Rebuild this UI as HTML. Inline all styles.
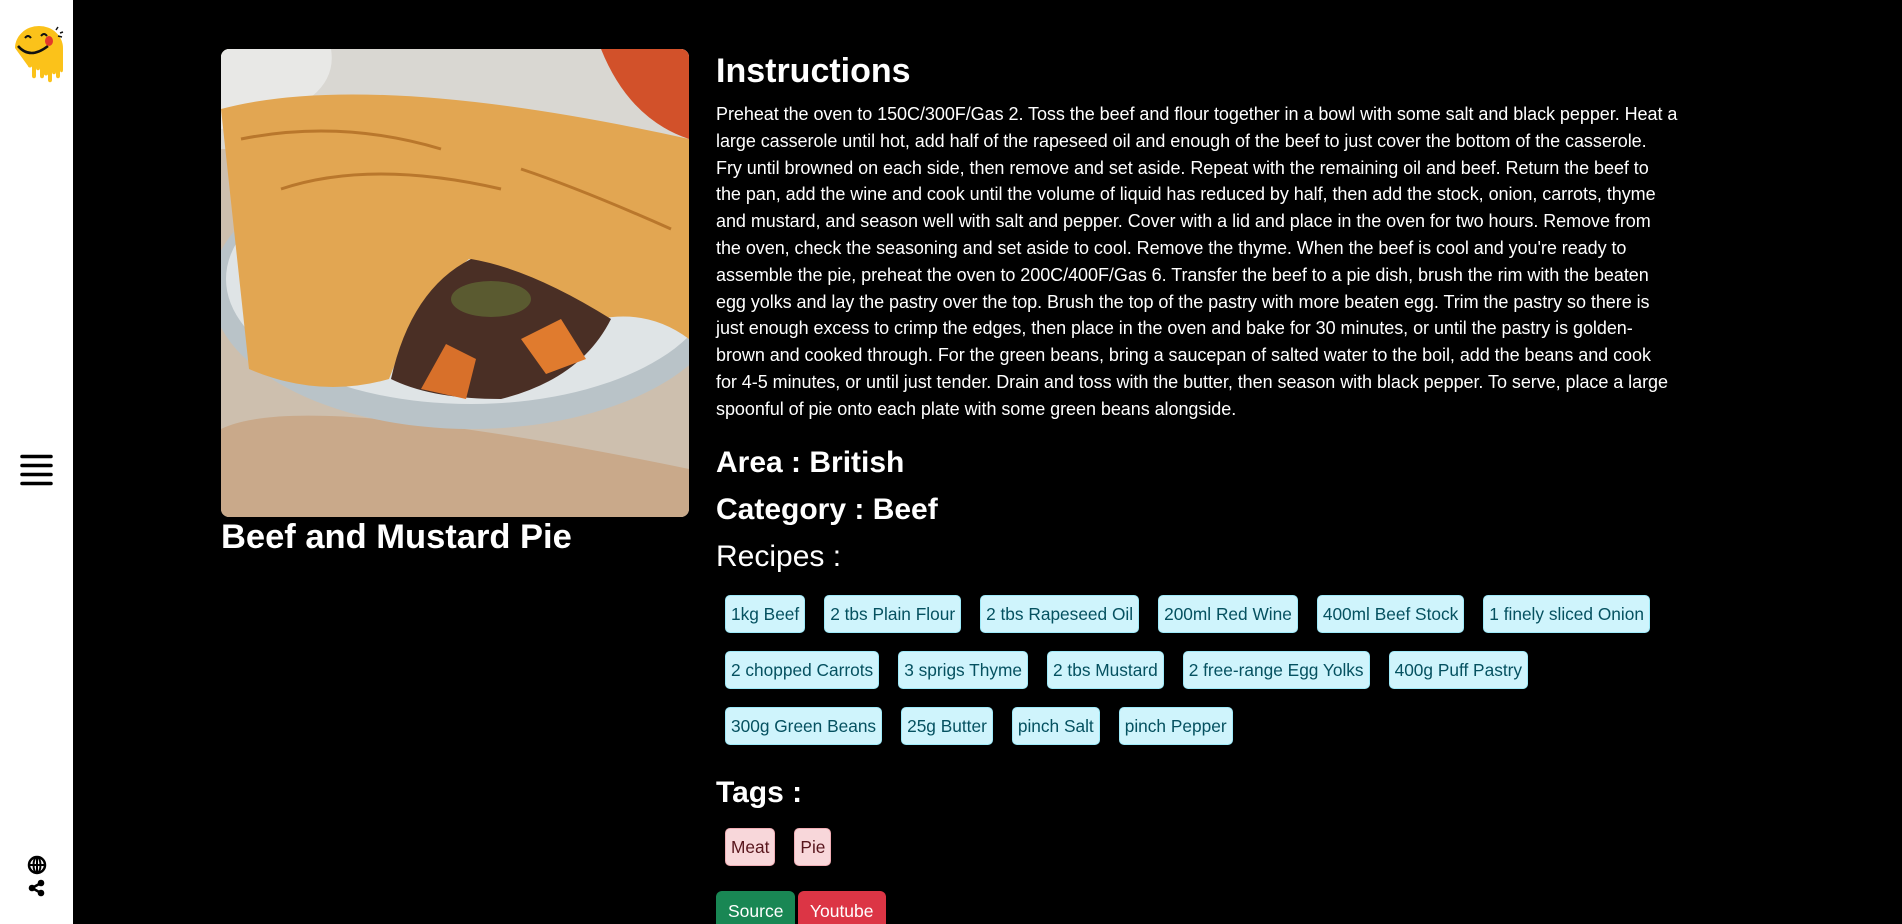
<!DOCTYPE html>
<html style="height:924px;overflow:hidden"><head><meta charset="utf-8"><style>
*{box-sizing:border-box;margin:0;padding:0}
body{width:1902px;height:924px;background:#000;color:#fff;font-family:"Liberation Sans",sans-serif;overflow:hidden;position:relative}
.side{position:absolute;left:0;top:0;width:73px;height:924px;background:#fff}
.img{position:absolute;left:221px;top:49px;width:468px;height:468px;border-radius:8px;overflow:hidden}
.title{position:absolute;left:221px;top:518px;font-size:34.5px;font-weight:bold}
.main{position:absolute;left:716px;top:52px;width:980px}
h1{font-size:34px;font-weight:bold;margin-bottom:10px}
p{font-size:18px;line-height:26.8px;letter-spacing:-0.05px;white-space:nowrap}
h2{font-size:30px;font-weight:bold;line-height:47px}
h3{font-size:30px;font-weight:normal;line-height:47px}
.chips{padding-left:9px;margin-top:15px}
.chip{display:inline-block;height:38px;line-height:36px;padding:0 5px;border:1px solid #9eeaf9;background:#cff4fc;color:#055160;border-radius:5px;font-size:17.3px;margin:0 19px 18px 0}
.tag{background:#f8d7da;border-color:#f1aeb5;color:#58151c}
.btn{display:inline-block;height:40px;line-height:40px;padding:0 12px;color:#fff;border-radius:6px 6px 0 0;font-size:17.5px}
</style></head><body>
<div class="side">
<svg style="position:absolute;left:12px;top:26px" width="54" height="60" viewBox="0 0 54 60">
<path d="M3 22a24 22 0 0 1 48 0v22c0 3-3 3-3 0v6c0 3-4 3-4 0v-4c0 3-4 3-4 0v8c0 3-4 3-4 0v-6c0 2-4 2-4 0v2c0 3-4 3-4 0v-8c0 3-4 3-4 0v8c0 3-4 3-4 0v-10c0 2-4 2-4 0z" fill="#fbc21a"/>
<path d="M6 20q12 14 30 0" stroke="#111" stroke-width="2.5" fill="none"/>
<path d="M13 12q3-4 6 0M29 10q3-4 6 0" stroke="#111" stroke-width="2" fill="none"/>
<ellipse cx="37" cy="15" rx="4" ry="5" fill="#e2392b"/>
<path d="M44 4l2-3M48 7l3-1M46 10l4 1" stroke="#111" stroke-width="1.5"/>
</svg>
<svg style="position:absolute;left:20px;top:454px" width="33" height="34"><g stroke="#000" stroke-width="3.5" stroke-linecap="round"><line x1="2" y1="2.5" x2="31" y2="2.5"/><line x1="2" y1="11.5" x2="31" y2="11.5"/><line x1="2" y1="20.5" x2="31" y2="20.5"/><line x1="2" y1="29.5" x2="31" y2="29.5"/></g></svg>
<svg style="position:absolute;left:27px;top:855px" width="20" height="20" viewBox="0 0 20 20"><circle cx="10" cy="10" r="8" fill="none" stroke="#000" stroke-width="2.5"/><ellipse cx="10" cy="10" rx="3.5" ry="8" fill="none" stroke="#000" stroke-width="2"/><line x1="2" y1="10" x2="18" y2="10" stroke="#000" stroke-width="2"/><line x1="10" y1="2" x2="10" y2="18" stroke="#000" stroke-width="2"/></svg>
<svg style="position:absolute;left:28px;top:879px" width="18" height="18" viewBox="0 0 18 18"><line x1="4" y1="9" x2="13" y2="4" stroke="#000" stroke-width="2.5"/><line x1="4" y1="9" x2="13" y2="14" stroke="#000" stroke-width="2.5"/><circle cx="4" cy="9" r="3.3"/><circle cx="13" cy="4" r="3.3"/><circle cx="13" cy="14" r="3.3"/></svg>
</div>
<div class="img"><svg width="468" height="468" viewBox="0 0 468 468">
<rect width="468" height="468" fill="#cdbfae"/>
<rect width="468" height="100" fill="#d9d7d2"/>
<path d="M0 0h110q10 60-110 80z" fill="#e8e8e6"/>
<path d="M380 0h88v90q-60-20-88-90z" fill="#d2512a"/>
<path d="M0 380q80-40 468 40v48H0z" fill="#c9a98a"/>
<ellipse cx="250" cy="240" rx="260" ry="140" fill="#b9c3c8"/>
<ellipse cx="250" cy="230" rx="245" ry="125" fill="#dfe4e6"/>
<path d="M0 60q150-40 468 30v200q-40-30-90-20q-60-40-130-60q-50 40-80 120q-70 20-140-10z" fill="#e2a652"/>
<path d="M20 90q100-20 200 10M60 140q90-30 220 0M300 120q60 20 150 60" stroke="#b9772c" stroke-width="3" fill="none"/>
<path d="M170 330q20-90 80-120q60 10 140 60q-30 60-110 80q-70 0-110-20z" fill="#4a2f25"/>
<path d="M200 340l25-45 30 15-10 40z" fill="#d8702a"/>
<path d="M300 290l40-20 25 40-40 15z" fill="#e07b2e"/>
<ellipse cx="270" cy="250" rx="40" ry="18" fill="#5a5a30"/>
</svg></div>
<div class="title">Beef and Mustard Pie</div>
<div class="main">
<h1>Instructions</h1>
<p>Preheat the oven to 150C/300F/Gas 2. Toss the beef and flour together in a bowl with some salt and black pepper. Heat a<br>large casserole until hot, add half of the rapeseed oil and enough of the beef to just cover the bottom of the casserole.<br>Fry until browned on each side, then remove and set aside. Repeat with the remaining oil and beef. Return the beef to<br>the pan, add the wine and cook until the volume of liquid has reduced by half, then add the stock, onion, carrots, thyme<br>and mustard, and season well with salt and pepper. Cover with a lid and place in the oven for two hours. Remove from<br>the oven, check the seasoning and set aside to cool. Remove the thyme. When the beef is cool and you're ready to<br>assemble the pie, preheat the oven to 200C/400F/Gas 6. Transfer the beef to a pie dish, brush the rim with the beaten<br>egg yolks and lay the pastry over the top. Brush the top of the pastry with more beaten egg. Trim the pastry so there is<br>just enough excess to crimp the edges, then place in the oven and bake for 30 minutes, or until the pastry is golden-<br>brown and cooked through. For the green beans, bring a saucepan of salted water to the boil, add the beans and cook<br>for 4-5 minutes, or until just tender. Drain and toss with the butter, then season with black pepper. To serve, place a large<br>spoonful of pie onto each plate with some green beans alongside.</p>
<h2 style="margin-top:16px">Area : British</h2>
<h2>Category : Beef</h2>
<h3>Recipes :</h3>
<div class="chips"><span class="chip">1kg Beef</span><span class="chip">2 tbs Plain Flour</span><span class="chip">2 tbs Rapeseed Oil</span><span class="chip">200ml Red Wine</span><span class="chip">400ml Beef Stock</span><span class="chip">1 finely sliced Onion</span><br><span class="chip">2 chopped Carrots</span><span class="chip">3 sprigs Thyme</span><span class="chip">2 tbs Mustard</span><span class="chip">2 free-range Egg Yolks</span><span class="chip">400g Puff Pastry</span><br><span class="chip">300g Green Beans</span><span class="chip">25g Butter</span><span class="chip">pinch Salt</span><span class="chip">pinch Pepper</span></div>
<h2 style="margin-top:6px">Tags :</h2>
<div class="chips" style="margin-top:12px"><span class="chip tag">Meat</span><span class="chip tag">Pie</span></div>
<div style="margin-top:7px"><span class="btn" style="background:#198754">Source</span> <span class="btn" style="background:#dc3545;margin-left:-2px">Youtube</span></div>
</div>
</body></html>
